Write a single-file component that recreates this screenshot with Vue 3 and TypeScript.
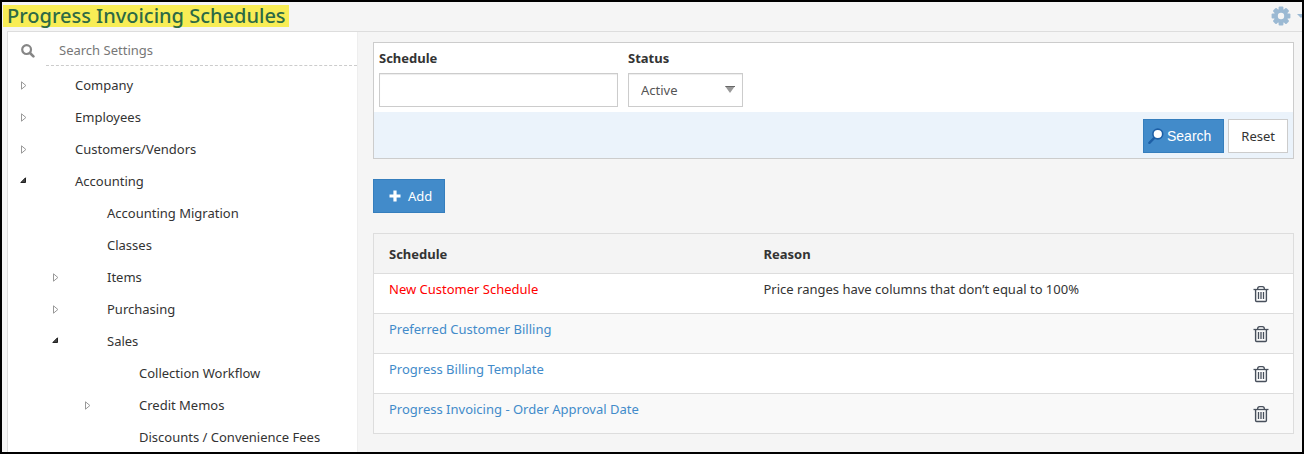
<script setup lang="ts">
import { ref } from 'vue'

interface TreeNode {
  label: string
  level: number
  state: 'open' | 'closed' | 'leaf'
}

interface ScheduleRow {
  name: string
  reason: string
  invalid: boolean
}

const nodes: TreeNode[] = [
  { label: 'Company', level: 0, state: 'closed' },
  { label: 'Employees', level: 0, state: 'closed' },
  { label: 'Customers/Vendors', level: 0, state: 'closed' },
  { label: 'Accounting', level: 0, state: 'open' },
  { label: 'Accounting Migration', level: 1, state: 'leaf' },
  { label: 'Classes', level: 1, state: 'leaf' },
  { label: 'Items', level: 1, state: 'closed' },
  { label: 'Purchasing', level: 1, state: 'closed' },
  { label: 'Sales', level: 1, state: 'open' },
  { label: 'Collection Workflow', level: 2, state: 'leaf' },
  { label: 'Credit Memos', level: 2, state: 'closed' },
  { label: 'Discounts / Convenience Fees', level: 2, state: 'leaf' },
]

const rows: ScheduleRow[] = [
  { name: 'New Customer Schedule', reason: 'Price ranges have columns that don’t equal to 100%', invalid: true },
  { name: 'Preferred Customer Billing', reason: '', invalid: false },
  { name: 'Progress Billing Template', reason: '', invalid: false },
  { name: 'Progress Invoicing - Order Approval Date', reason: '', invalid: false },
]

const settingsQuery = ref('')
const schedule = ref('')
const status = ref('Active')

function reset() {
  schedule.value = ''
  status.value = 'Active'
}
</script>

<template>
  <div class="frame">
    <header class="topbar">
      <h1>Progress Invoicing Schedules</h1>
      <button class="gear" type="button" aria-label="Page options">
        <svg width="20" height="20" viewBox="0 0 20 20" aria-hidden="true">
          <g fill="#9bb9d3">
            <rect v-for="a in [0, 45, 90, 135]" :key="a" x="7.6" y="0.6" width="4.8" height="18.8" rx="1" :transform="`rotate(${a} 10 10)`" />
            <circle cx="10" cy="10" r="7" />
          </g>
          <circle cx="10" cy="10" r="3.2" fill="#f5f5f5" />
        </svg>
        <svg width="8" height="4" viewBox="0 0 8 4" aria-hidden="true"><path d="M0 0h8L4 4z" fill="#9bb9d3" /></svg>
      </button>
    </header>

    <div class="body">
      <nav class="sidebar" aria-label="Settings">
        <div class="find">
          <svg width="14" height="14" viewBox="0 0 14 14" fill="none" stroke="#868686" aria-hidden="true">
            <circle cx="5.6" cy="5.6" r="4.4" stroke-width="2.2" />
            <path d="M9 9l3.4 3.4" stroke-width="2.6" stroke-linecap="round" />
          </svg>
          <input v-model="settingsQuery" type="text" placeholder="Search Settings" aria-label="Search Settings" />
        </div>
        <ul class="tree">
          <li v-for="node in nodes" :key="node.label" :class="'level-' + node.level">
            <span class="toggle">
              <svg v-if="node.state === 'closed'" width="7" height="9" viewBox="0 0 7 9" aria-hidden="true">
                <path d="M1.5 .8v7.4l4.4-3.7z" fill="#fff" stroke="#999" />
              </svg>
              <svg v-else-if="node.state === 'open'" class="opened" width="7" height="6" viewBox="0 0 7 6" aria-hidden="true">
                <path d="M5.5 .8v4.7H.8z" fill="#444" stroke="#222" />
              </svg>
            </span>
            <a href="#">{{ node.label }}</a>
          </li>
        </ul>
      </nav>

      <main>
        <form class="filters" @submit.prevent>
          <div class="fields">
            <div class="field schedule">
              <label for="schedule">Schedule</label>
              <input id="schedule" v-model="schedule" type="text" />
            </div>
            <div class="field status">
              <label for="status">Status</label>
              <div class="select">
                <select id="status" v-model="status">
                  <option>Active</option>
                  <option>Inactive</option>
                </select>
                <svg width="10" height="7" viewBox="0 0 10 7" aria-hidden="true">
                  <path d="M0 0h10L5 7z" fill="#999" />
                  <path d="M0 0h10v1H1z" fill="#666" />
                </svg>
              </div>
            </div>
          </div>
          <div class="actions">
            <button class="btn primary search" type="submit">
              <svg width="16" height="16" viewBox="0 0 16 16" aria-hidden="true">
                <path d="M6.3 9.8L1.4 14.8" stroke="#1d5fa6" stroke-width="2.4" stroke-linecap="round" />
                <circle cx="9.8" cy="6" r="4.9" fill="#fff" stroke="#1d5fa6" stroke-width="1.6" />
              </svg>
              Search
            </button>
            <button class="btn" type="button" @click="reset">Reset</button>
          </div>
        </form>

        <button class="btn primary add" type="button">
          <svg width="12" height="12" viewBox="0 0 12 12" aria-hidden="true"><path d="M4.4 .5h3.2v3.9h3.9v3.2H7.6v3.9H4.4V7.6H.5V4.4h3.9z" fill="#fff" /></svg>
          Add
        </button>

        <table>
          <thead>
            <tr>
              <th class="name" scope="col">Schedule</th>
              <th scope="col">Reason</th>
              <th class="tools" scope="col" aria-label="Actions"></th>
            </tr>
          </thead>
          <tbody>
            <tr v-for="row in rows" :key="row.name">
              <td><a href="#" :class="{ invalid: row.invalid }">{{ row.name }}</a></td>
              <td>{{ row.reason }}</td>
              <td class="tools">
                <button class="trash" type="button" :aria-label="'Delete ' + row.name">
                  <svg width="16" height="18" viewBox="0 0 16 18" fill="none" stroke="#48505c" aria-hidden="true">
                    <path d="M.5 4.5h15" stroke-width="1.3" />
                    <path d="M4.6 4.2C4.6 2.4 5.4 1.6 6.6 1.6h2.8c1.2 0 2 .8 2 2.6" stroke-width="1.3" />
                    <path d="M2.6 4.8v10.6c0 .8.3 1.1 1 1.1h8.8c.7 0 1-.3 1-1.1V4.8" stroke-width="1.4" />
                    <path d="M5.5 7v7M8 7v7M10.5 7v7" stroke-width="1.3" />
                  </svg>
                </button>
              </td>
            </tr>
          </tbody>
        </table>
      </main>
    </div>
  </div>
</template>

<style>
body {
  margin: 0;
}
</style>

<style scoped>
* {
  box-sizing: border-box;
}

.frame {
  display: flex;
  flex-direction: column;
  height: 100vh;
  overflow: hidden;
  border: 2px solid #000;
  background: #f5f5f5;
  color: #333;
  font: 13px/20px "Noto Sans", "Open Sans", sans-serif;
}

input,
select,
button {
  font: inherit;
  color: inherit;
}

a {
  color: #428bca;
  text-decoration: none;
}

.topbar {
  display: flex;
  flex: none;
  align-items: center;
  justify-content: space-between;
  height: 29px;
  padding: 0 0 2px 1px;
}

h1 {
  margin: 0;
  padding: 0 3px 0 4px;
  background: #f8ed55;
  color: #2d6a45;
  font-size: 20px;
  font-weight: 500;
  line-height: 22px;
}

.gear {
  display: flex;
  flex: none;
  align-items: center;
  gap: 6px;
  width: 31px;
  padding: 0;
  overflow: hidden;
  border: 0;
  background: none;
}

.gear svg {
  flex: none;
}

.body {
  display: flex;
  flex: 1;
  min-height: 0;
  margin-left: 5px;
  border-top: 1px solid #ddd;
}

.sidebar {
  flex: none;
  width: 351px;
  border: 1px solid #ddd;
  border-width: 0 1px;
  border-right-color: #eee;
  background: #fff;
}

.find {
  display: flex;
  align-items: center;
  padding-left: 13px;
}

.find svg {
  margin-top: 4px;
}

.find input {
  flex: 1;
  min-width: 0;
  height: 34px;
  margin-left: 11px;
  padding: 2px 12px 0 13px;
  border: 0;
  border-bottom: 1px dashed #ccc;
  outline: 0;
  background: none;
}

.find input::placeholder {
  color: #777;
  opacity: 1;
}

.tree {
  margin: 0;
  padding: 3px 0 0;
  list-style: none;
}

.tree li {
  display: flex;
  align-items: center;
  height: 32px;
  padding-left: 12px;
}

.tree li.level-1 {
  padding-left: 44px;
}

.tree li.level-2 {
  padding-left: 76px;
}

.tree a {
  color: #333;
}

.toggle {
  display: flex;
  width: 55px;
}

.opened {
  margin-bottom: 2px;
}

main {
  flex: 1;
  min-width: 0;
  padding: 10px 8px 0 15px;
}

.filters {
  border: 1px solid #ccc;
  background: #fff;
}

.fields {
  display: flex;
  gap: 10px;
  padding: 5px;
}

.field label {
  display: block;
  margin-bottom: 5px;
  font-weight: 700;
}

.schedule {
  width: 239px;
}

.status {
  width: 115px;
}

.field input,
.field select {
  display: block;
  width: 100%;
  height: 34px;
  padding: 0 12px;
  border: 1px solid #ccc;
  border-radius: 0;
  background: #fff;
  box-shadow: inset 0 1px 1px rgba(0, 0, 0, 0.075);
  color: #555;
  appearance: none;
}

.select {
  position: relative;
}

.select svg {
  position: absolute;
  top: 13px;
  right: 8px;
  pointer-events: none;
}

.actions {
  display: flex;
  justify-content: flex-end;
  gap: 4px;
  padding: 7px 5px 5px;
  background: #ebf3fb;
}

.btn {
  display: inline-flex;
  align-items: center;
  height: 34px;
  padding: 0 12px;
  border: 1px solid #ccc;
  background: #fff;
}

.primary {
  border-color: #357ebd;
  background: #428bca;
  color: #fff;
}

.search {
  gap: 3px;
  padding: 0 12px 0 4px;
  font: 14px/20px "Liberation Sans", Arial, sans-serif;
}

.add {
  gap: 7px;
  margin: 20px 0;
  padding: 0 12px 0 15px;
}

table {
  width: 100%;
  border: 1px solid #ddd;
  border-collapse: collapse;
  table-layout: fixed;
  background: #fff;
}

tr {
  height: 40px;
  border-top: 1px solid #ddd;
}

th {
  padding: 0 15px;
  background: #f4f4f4;
  font-weight: 700;
  text-align: left;
}

td {
  padding: 5px 15px;
  vertical-align: top;
}

.name {
  width: 375px;
}

.tools {
  width: 65px;
}

tbody tr:nth-child(even) {
  background: #f9f9f9;
}

.invalid {
  color: #f00;
}

td.tools {
  padding: 11px 0 0 24px;
}

.trash {
  display: block;
  padding: 0;
  border: 0;
  background: none;
}

.trash svg {
  display: block;
}
</style>
